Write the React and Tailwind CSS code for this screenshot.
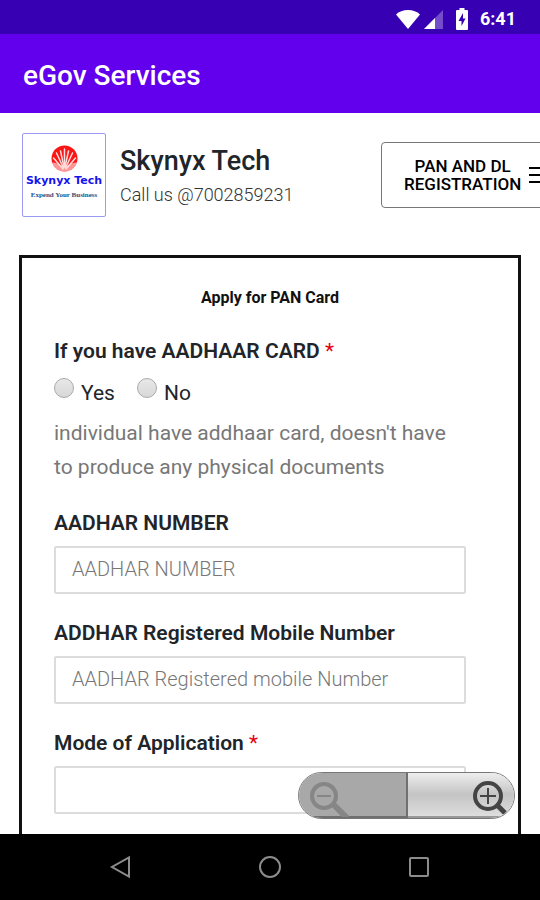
import { useState } from 'react';

const fields = [
  { id: 'aadhar', label: 'AADHAR NUMBER', placeholder: 'AADHAR NUMBER' },
  { id: 'mobile', label: 'ADDHAR Registered Mobile Number', placeholder: 'AADHAR Registered mobile Number' },
];

function StatusBar() {
  return (
    <div className="flex h-[34px] shrink-0 items-center justify-end bg-[#3700b3] pt-1 pr-6 text-white">
      <svg className="h-5 w-6" viewBox="0 0 24 20" fill="currentColor">
        <path d="M0 5.5C3 2.5 7 1 12 1s9 1.500 12 4.500L12 20z" />
      </svg>
      <svg className="ml-1 h-5 w-5" viewBox="0 0 20 20" fill="currentColor">
        <path d="M0 20L19 1v19z" opacity="0.3" />
        <path d="M0 20L11 9v11z" />
      </svg>
      <svg className="ml-3 h-[22px] w-3" viewBox="0 0 12 22">
        <path d="M3.500 0h5v2H11q1 0 1 1v18q0 1-1 1H1q-1 0-1-1V3q0-1 1-1h2.500z" fill="currentColor" />
        <path d="M7 5L2.500 13H5.500V18L9.500 10.500H7z" fill="#3700b3" />
      </svg>
      <span className="ml-3 text-lg font-bold">6:41</span>
    </div>
  );
}

function Logo() {
  return (
    <div className="flex size-[84px] shrink-0 flex-col items-center rounded-xs border border-[#9a9af5] pt-[11px]">
      <svg className="size-[27px]" viewBox="0 0 27 27">
        <circle cx="13.500" cy="13.500" r="13" fill="#fa1414" />
        <path d="M1 17.500q6 0 12.500 5Q20 17.500 26 17.500 23 26.500 13.500 26.500T1 17.500z" fill="#fcc" opacity="0.7" />
        <g stroke="#fdd" strokeWidth="1.500" strokeLinecap="round">
          <path d="M12 24L2.500 13" />
          <path d="M12.500 23L5.500 8" />
          <path d="M13 22L9.500 6" />
          <path d="M13.500 22V4" />
          <path d="M14 22L17.500 6" />
          <path d="M14.500 23L21.500 8" />
          <path d="M15 24L24.500 13" />
        </g>
      </svg>
      <span className="mt-px font-['DejaVu_Sans'] text-[11px] leading-4 font-bold whitespace-nowrap text-[#1414f0]">Skynyx Tech</span>
      <span className="font-['Liberation_Serif'] text-[7px] leading-3 font-bold text-[#2a5080]">Expend Your Business</span>
    </div>
  );
}

function ZoomControls() {
  return (
    <div className="absolute right-[25px] bottom-[15px] flex h-[47px] w-[217px] overflow-hidden rounded-full border border-[#777]">
      <button type="button" aria-label="Zoom out" disabled className="w-[109px] border-r-2 border-b-2 border-[#707070] bg-[#a8a8a8] pl-2">
        <svg className="h-11 w-12" viewBox="0 0 48 44" fill="none" stroke="#868686">
          <circle cx="17" cy="23" r="12" strokeWidth="4" />
          <path d="M10 23h14" strokeWidth="2" />
          <path d="M26 31l14 14" strokeWidth="6" />
        </svg>
      </button>
      <button
        type="button"
        aria-label="Zoom in"
        className="flex flex-1 justify-end border-b-2 border-[#999] bg-linear-to-b from-[#eeeeee] via-[#c4c4c4] to-[#dedede]"
      >
        <svg className="h-11 w-11" viewBox="0 0 44 44" fill="none" stroke="#444">
          <circle cx="18" cy="23" r="13" strokeWidth="4" />
          <path d="M10 23h16M18 15v16" strokeWidth="2" />
          <path d="M27 32l8 8" strokeWidth="5" />
        </svg>
      </button>
    </div>
  );
}

function NavBar() {
  return (
    <nav className="flex h-[66px] shrink-0 items-center justify-center gap-[125px] bg-black text-[#8c8c8c]">
      <button type="button" aria-label="Back">
        <svg className="size-6" viewBox="0 0 24 24" fill="none" stroke="currentColor" strokeWidth="2">
          <path d="M20 2.500v19L3 12z" />
        </svg>
      </button>
      <button type="button" aria-label="Home">
        <svg className="size-6" viewBox="0 0 24 24" fill="none" stroke="currentColor" strokeWidth="2">
          <circle cx="12" cy="12" r="10" />
        </svg>
      </button>
      <button type="button" aria-label="Recent apps">
        <svg className="size-6" viewBox="0 0 24 24" fill="none" stroke="currentColor" strokeWidth="2">
          <rect x="3" y="3" width="18" height="18" rx="1" />
        </svg>
      </button>
    </nav>
  );
}

export default function App() {
  const [hasCard, setHasCard] = useState('');

  return (
    <div className="flex h-screen flex-col overflow-hidden bg-white font-['Roboto',sans-serif] text-[#212529]">
      <StatusBar />
      <header className="flex h-[79px] shrink-0 items-center bg-[#6200ee] px-[23px] pt-1">
        <h1 className="text-[28px] font-medium text-white">eGov Services</h1>
      </header>

      <div className="relative min-h-0 flex-1 overflow-hidden">
        {/* Brand */}
        <div className="flex items-start pt-5 pl-[22px]">
          <Logo />
          <div className="ml-[14px] flex-1 pt-3">
            <h2 className="text-[27px] leading-8 font-medium">Skynyx Tech</h2>
            <p className="mt-1 text-lg leading-7 font-light text-[#333]">Call us @7002859231</p>
          </div>
          <button
            type="button"
            className="mt-[9px] -mr-5 flex h-[66px] w-[179px] shrink-0 items-center gap-2 rounded-sm border border-[#777] pl-[22px] text-[17px] leading-[18px] font-medium text-black"
          >
            <span>PAN AND DL<br />REGISTRATION</span>
            <svg className="size-5 shrink-0" viewBox="0 0 20 20" stroke="currentColor" strokeWidth="2">
              <path d="M0 3h20M0 10h20M0 17h20" />
            </svg>
          </button>
        </div>

        {/* Application form */}
        <form className="mx-[19px] mt-[38px] border-3 border-[#111] pt-[26px] pr-[52px] pb-12 pl-8">
          <h3 className="-mr-5 text-center text-base leading-7 font-bold text-[#111]">Apply for PAN Card</h3>

          <fieldset className="mt-6">
            <legend className="text-[21px] leading-[30px] font-semibold">
              If you have AADHAAR CARD <span className="font-normal text-red-600">*</span>
            </legend>
            <div className="mt-3 flex gap-[22px] text-[21px] leading-[30px]">
              {['Yes', 'No'].map(option => (
                <label key={option} className="flex gap-[7px]">
                  <input
                    type="radio"
                    name="has-card"
                    value={option}
                    checked={hasCard === option}
                    onChange={() => setHasCard(option)}
                    className="size-5 appearance-none rounded-full border border-[#aaa] bg-linear-to-b from-[#e8e8e8] to-[#d8d8d8] checked:border-4 checked:border-[#555]"
                  />
                  {option}
                </label>
              ))}
            </div>
            <p className="mt-2 text-[21px] leading-[34px] text-[#777]">
              individual have addhaar card, doesn't have to produce any physical documents
            </p>
          </fieldset>

          {fields.map(field => (
            <div key={field.id} className="mt-6">
              <label htmlFor={field.id} className="block text-[21px] leading-[30px] font-semibold">{field.label}</label>
              <input
                id={field.id}
                type="text"
                placeholder={field.placeholder}
                className="mt-2 h-12 w-full rounded-xs border-2 border-[#dcdcdc] px-4 pb-0.5 text-xl font-light placeholder:text-[#777]"
              />
            </div>
          ))}

          <div className="mt-6">
            <label htmlFor="mode" className="block text-[21px] leading-[30px] font-semibold">
              Mode of Application <span className="font-normal text-red-600">*</span>
            </label>
            <select id="mode" className="mt-2 h-12 w-full appearance-none rounded-xs border-2 border-[#dcdcdc] bg-white px-4 text-xl">
              <option value=""></option>
            </select>
          </div>
        </form>

        <ZoomControls />
      </div>

      <NavBar />
    </div>
  );
}
